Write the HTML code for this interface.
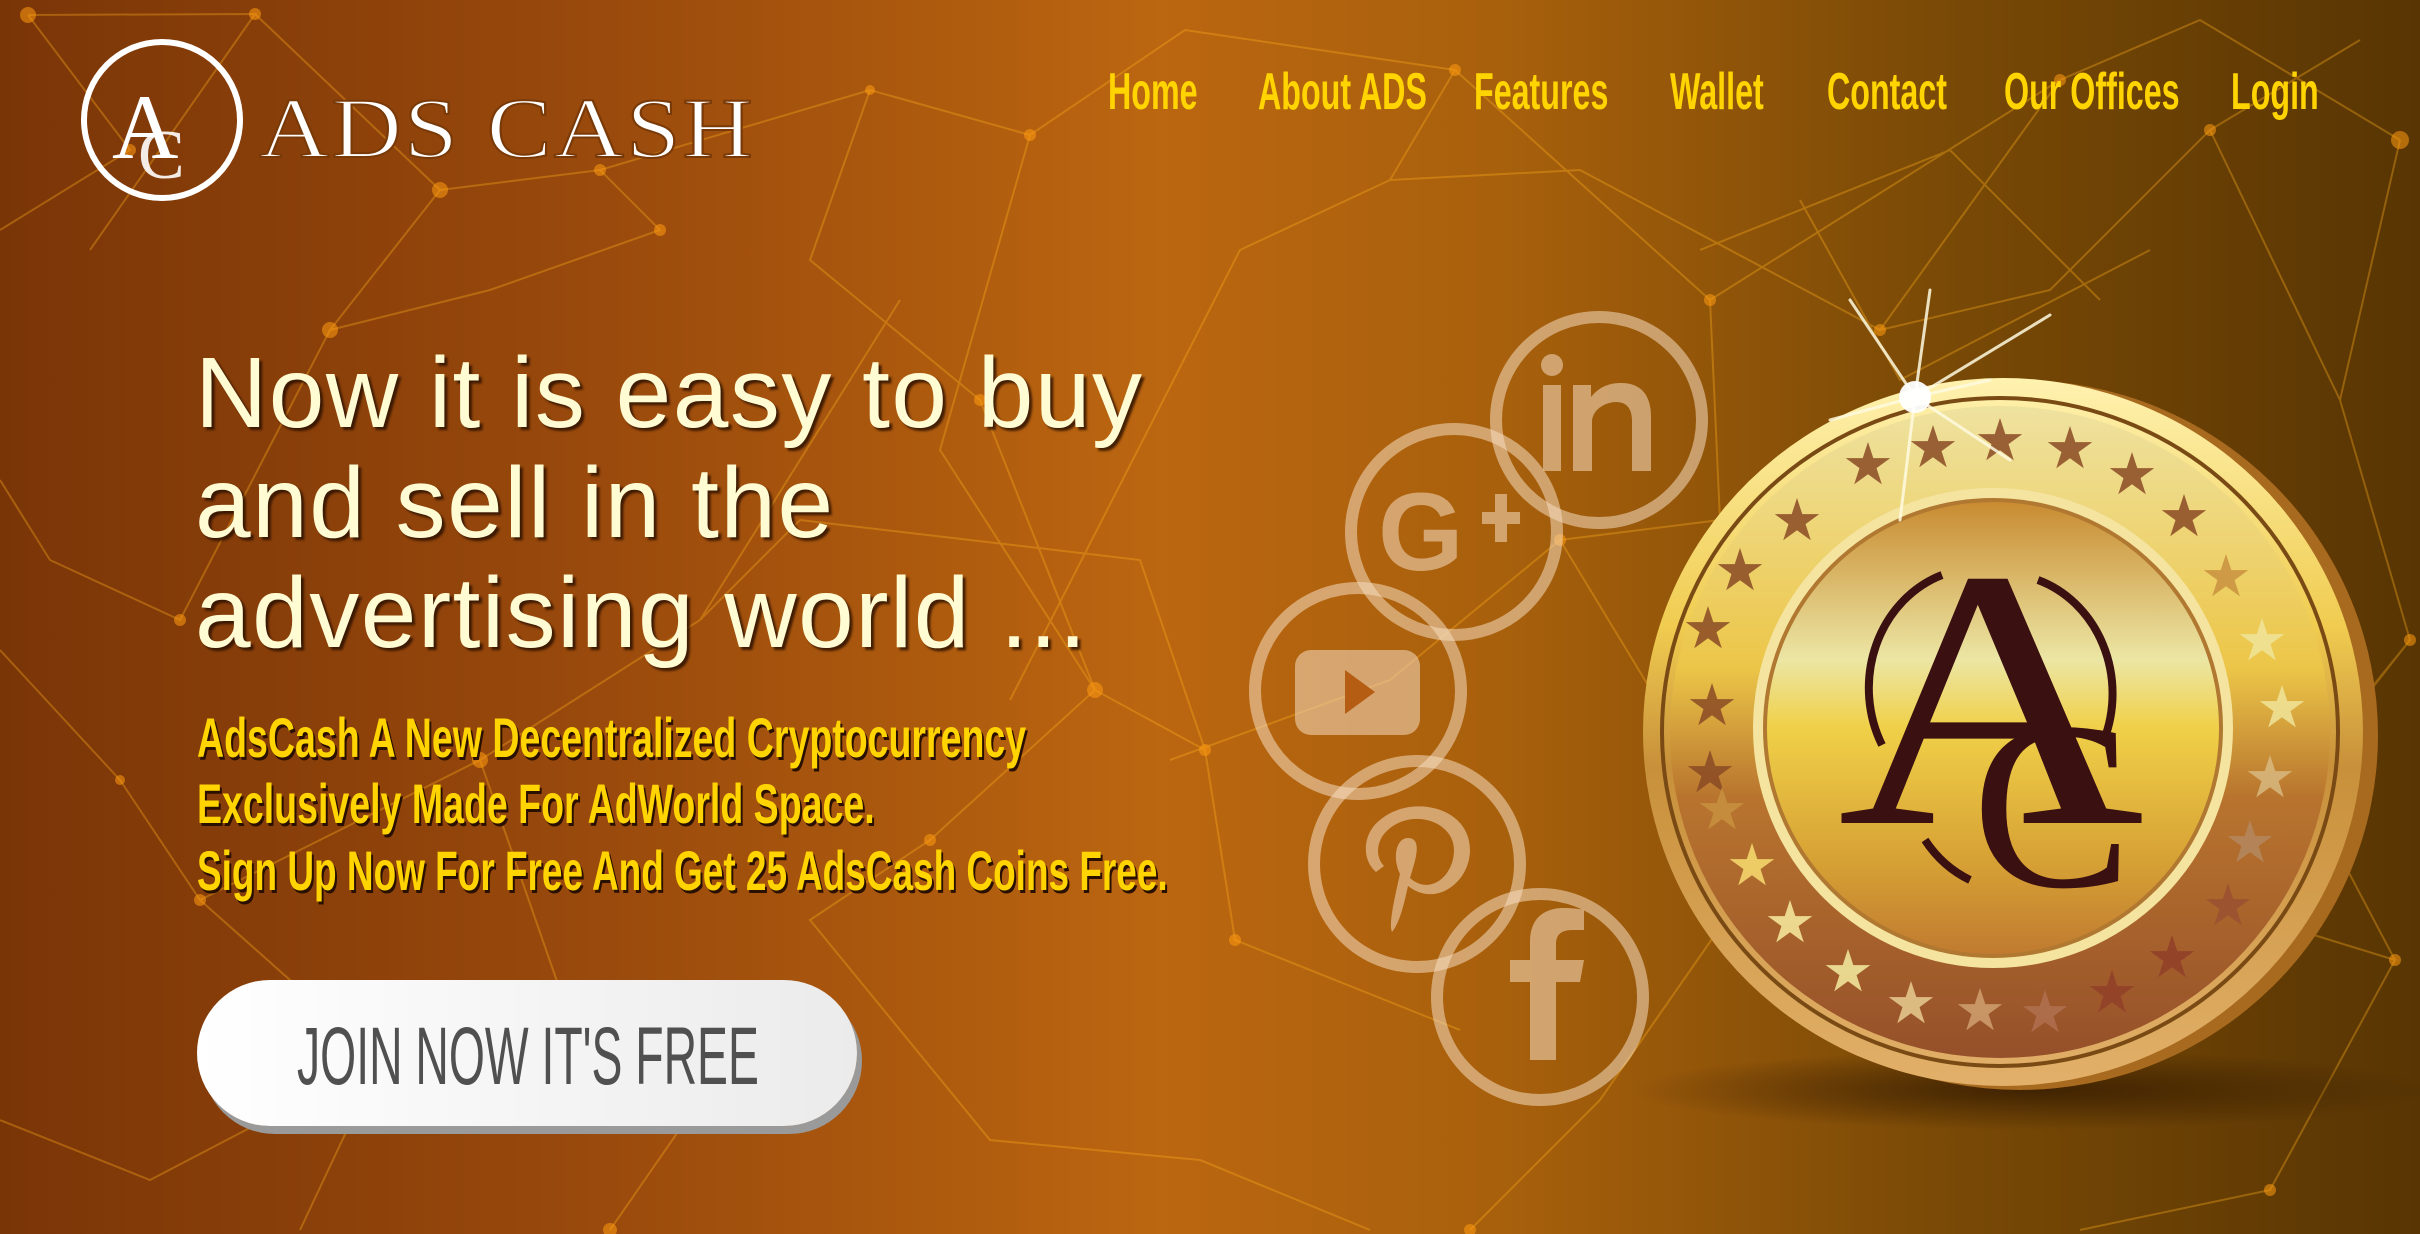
<!DOCTYPE html>
<html><head><meta charset="utf-8">
<style>
html,body{margin:0;padding:0}
body{width:2420px;height:1234px;overflow:hidden;position:relative;font-family:"Liberation Sans",sans-serif;
background:linear-gradient(90deg,#7a3507 0%,#9a4a0c 25%,#bb6610 48%,#a8600c 62%,#7a4a06 80%,#583503 100%);}
.nav{position:absolute;top:62px;color:#ffd400;font-family:"Liberation Sans Narrow","Liberation Sans",sans-serif;font-weight:bold;font-size:52px;transform:scaleX(0.62);transform-origin:left top;white-space:nowrap}
.h1{position:absolute;left:195px;top:338px;font-size:100px;line-height:110px;color:#fffbd2;text-shadow:3px 3px 2px rgba(40,15,0,.8);white-space:nowrap;letter-spacing:1.5px}
.sub{position:absolute;left:197px;white-space:nowrap;color:#ffd400;font-family:"Liberation Sans Narrow","Liberation Sans",sans-serif;font-weight:bold;font-size:56px;transform:scaleX(0.67);transform-origin:left top;text-shadow:3px 3px 0 #2a1000}
.btn{position:absolute;left:197px;top:980px;width:660px;height:146px;border-radius:73px;background:linear-gradient(90deg,#ffffff,#ebebeb);box-shadow:5px 8px 0 #9a9a9a}
.btn span{position:absolute;left:100px;top:30px;font-family:"Liberation Sans Narrow","Liberation Sans",sans-serif;font-size:82px;color:#505050;white-space:nowrap;transform:scaleX(0.565);transform-origin:left top}
</style></head><body>
<svg width="2420" height="1234" style="position:absolute;left:0;top:0" stroke="#ffb01e" stroke-opacity=".35" stroke-width="2" fill="none">
<path d="M28 15L130 150L0 230M28 15L255 14L90 250M255 14L440 190L330 330L180 620L50 560L0 480M440 190L600 170L660 230L490 290L330 330M600 170L870 90L1030 135L1185 30L1455 70L1710 300L2060 80L2200 20L2400 140M870 90L810 260L980 400L1095 690L930 840L810 920L990 1140L1200 1160L1370 1230M1030 135L940 450L1095 690L1205 750L1235 940L1460 1030M1455 70L1390 180L1240 250L1010 700M1710 300L1720 520L1560 540L1390 680L1170 760M2060 80L1880 330L2050 290L2210 130L2360 40M2400 140L2340 400L2410 640L2300 780L2395 960L2270 1190L2080 1230M200 900L380 1060L150 1180L0 1120M120 780L200 900L480 760L560 990L700 1100L610 1230M300 1230L380 1060M900 300L700 620L800 520L1140 560L1205 750M480 760L700 620M1560 540L1760 870L1600 1100L1470 1230M0 650L120 780M2340 400L2210 130M2410 640L2200 900L2395 960M1390 180L1580 170L1880 330M1700 250L1950 150L2100 300M1800 200L1900 380L2150 250"/>
<g fill="#ff9a10" fill-opacity=".55" stroke="none">
<circle cx="28" cy="15" r="8"/><circle cx="255" cy="14" r="6"/><circle cx="130" cy="150" r="6"/><circle cx="440" cy="190" r="8"/><circle cx="330" cy="330" r="8"/><circle cx="180" cy="620" r="6"/><circle cx="600" cy="170" r="6"/><circle cx="660" cy="230" r="6"/><circle cx="870" cy="90" r="5"/><circle cx="1030" cy="135" r="6"/><circle cx="1455" cy="70" r="6"/><circle cx="1710" cy="300" r="6"/><circle cx="2060" cy="80" r="6"/><circle cx="2400" cy="140" r="9"/><circle cx="980" cy="400" r="6"/><circle cx="1095" cy="690" r="8"/><circle cx="930" cy="840" r="6"/><circle cx="1205" cy="750" r="6"/><circle cx="1560" cy="540" r="6"/><circle cx="2410" cy="640" r="6"/><circle cx="200" cy="900" r="6"/><circle cx="480" cy="760" r="8"/><circle cx="560" cy="990" r="6"/><circle cx="380" cy="1060" r="7"/><circle cx="1470" cy="1230" r="6"/><circle cx="120" cy="780" r="5"/><circle cx="2395" cy="960" r="6"/><circle cx="2270" cy="1190" r="6"/><circle cx="1880" cy="330" r="6"/><circle cx="2210" cy="130" r="6"/><circle cx="610" cy="1230" r="7"/><circle cx="1235" cy="940" r="6"/>
</g>
</svg>

<svg width="800" height="220" style="position:absolute;left:0;top:20px">
<circle cx="162" cy="100" r="78" fill="none" stroke="#fff" stroke-width="6"/>
<text x="112" y="138" font-family="Liberation Serif,serif" font-size="92" fill="#fff">A</text>
<text x="138" y="158" font-family="Liberation Serif,serif" font-size="70" fill="#fff" fill-opacity=".9">C</text>
<text x="259" y="137" font-family="Liberation Serif,serif" font-size="86" fill="#fff" stroke="#7a3a08" stroke-width="2" letter-spacing="2" textLength="496" lengthAdjust="spacingAndGlyphs">ADS CASH</text>
</svg>

<div class="nav" style="left:1108px">Home</div>
<div class="nav" style="left:1258px">About ADS</div>
<div class="nav" style="left:1474px">Features</div>
<div class="nav" style="left:1670px">Wallet</div>
<div class="nav" style="left:1827px">Contact</div>
<div class="nav" style="left:2004px">Our Offices</div>
<div class="nav" style="left:2231px">Login</div>

<div class="h1">Now it is easy to buy<br>and sell in the<br>advertising world ...</div>

<div class="sub" style="top:705px">AdsCash A New Decentralized Cryptocurrency</div>
<div class="sub" style="top:771px">Exclusively Made For AdWorld Space.</div>
<div class="sub" style="top:838px;transform:scaleX(0.66)">Sign Up Now For Free And Get 25 AdsCash Coins Free.</div>

<div class="btn"><span>JOIN NOW IT'S FREE</span></div>

<svg width="2420" height="1234" style="position:absolute;left:0;top:0">
<g fill="none" stroke="#f5dcc0" stroke-opacity=".55" stroke-width="12">
<circle cx="1599" cy="420" r="103"/><circle cx="1454" cy="532" r="103"/><circle cx="1358" cy="691" r="103"/><circle cx="1417" cy="864" r="103"/><circle cx="1540" cy="997" r="103"/>
</g>
<g fill="#f0d2b0" fill-opacity=".6">
<rect x="1543" y="385" width="18" height="86"/><circle cx="1552" cy="365" r="11"/>
<path d="M1573 385h18v12c8-10 18-14 30-14 20 0 30 12 30 34v54h-19v-50c0-12-5-19-16-19s-24 8-24 20v49h-19z"/>
<text x="1378" y="570" font-family="Liberation Sans,sans-serif" font-weight="bold" font-size="110" fill="#f0d2b0" fill-opacity=".6">G</text>
<path d="M1482 512h13v-18h12v18h13v12h-13v18h-12v-18h-13z"/>
<rect x="1295" y="650" width="125" height="85" rx="16"/>
</g>
<path d="M1345 670l30 22-30 22z" fill="#b55d12"/>
<path d="M1392 932c-4-8 4-40 8-58-8-16-4-36 8-36 16 0 6 26 2 40 20 18 44-2 44-28 0-30-46-44-70-16-8 10-8 24 0 32l-8 6c-16-14-12-40 4-52 30-26 90-14 90 30 0 32-34 58-62 36-4 18-8 36-16 46z" fill="#f0d2b0" fill-opacity=".6"/>
<path d="M1530 1060v-78h-20v-22h20v-18c0-22 12-34 34-34 8 0 16 1 20 2v20h-12c-12 0-16 6-16 14v16h28l-4 22h-24v78z" fill="#f0d2b0" fill-opacity=".6"/>
</svg>

<svg width="2420" height="1234" style="position:absolute;left:0;top:0">
<defs>
<linearGradient id="rim" x1="0" y1="0" x2="0" y2="1">
<stop offset="0" stop-color="#fff2b0"/><stop offset=".35" stop-color="#f0cc50"/><stop offset=".55" stop-color="#c8903a"/><stop offset="1" stop-color="#e2b06a"/></linearGradient>
<linearGradient id="ring" x1="0" y1="0" x2="0" y2="1">
<stop offset="0" stop-color="#efe2a0"/><stop offset=".4" stop-color="#ecc648"/><stop offset=".6" stop-color="#b8742e"/><stop offset="1" stop-color="#96502a"/></linearGradient>
<linearGradient id="face" x1="0" y1="0" x2="0" y2="1">
<stop offset="0" stop-color="#c88a30"/><stop offset=".35" stop-color="#ece6a4"/><stop offset=".5" stop-color="#f0d048"/><stop offset=".8" stop-color="#d6a034"/><stop offset="1" stop-color="#c07a30"/></linearGradient>
<radialGradient id="sh" cx=".5" cy=".5" r=".5"><stop offset="0" stop-color="#2a1400" stop-opacity=".7"/><stop offset="1" stop-color="#2a1400" stop-opacity="0"/></radialGradient>
</defs>
<ellipse cx="2030" cy="1090" rx="400" ry="40" fill="url(#sh)"/>
<ellipse cx="2020" cy="735" rx="358" ry="355" fill="#a86a1e"/>
<ellipse cx="2003" cy="732" rx="360" ry="354" fill="url(#rim)"/>
<ellipse cx="2000" cy="732" rx="338" ry="334" fill="none" stroke="#7a4a14" stroke-width="4"/>
<ellipse cx="2000" cy="732" rx="330" ry="326" fill="url(#ring)"/>
<g fill="#8a4a24" fill-opacity=".85" font-size="58" text-anchor="middle" font-family="DejaVu Sans,sans-serif">
<text x="1797" y="540">★</text><text x="1868" y="484">★</text><text x="1933" y="467">★</text><text x="2000" y="460">★</text><text x="2070" y="468">★</text><text x="2132" y="494">★</text><text x="2184" y="536">★</text><text x="1740" y="590">★</text><text x="1708" y="648">★</text><text x="1712" y="725">★</text><text x="1710" y="792">★</text>
<text x="2226" y="596" fill="#c89040">★</text><text x="2262" y="660" fill="#f0e49a">★</text><text x="2282" y="727" fill="#f0e49a">★</text><text x="2270" y="797" fill="#d8b880">★</text><text x="2250" y="862" fill="#b48860">★</text><text x="2228" y="925" fill="#9a5030">★</text><text x="2172" y="977" fill="#904028">★</text><text x="2112" y="1012" fill="#904028">★</text><text x="2045" y="1032" fill="#b07050">★</text><text x="1980" y="1030" fill="#d0a070">★</text><text x="1911" y="1023" fill="#e8cc90">★</text><text x="1848" y="991" fill="#f4eca0">★</text><text x="1790" y="942" fill="#f8eca0">★</text><text x="1752" y="885" fill="#f8dc70">★</text><text x="1722" y="829" fill="#c89040">★</text>
</g>
<ellipse cx="1993" cy="728" rx="240" ry="240" fill="#f4e4a0"/>
<ellipse cx="1993" cy="728" rx="228" ry="228" fill="url(#face)" stroke="#b07830" stroke-width="4"/>
<g fill="none" stroke="#3a1010" stroke-width="8">
<path d="M1882 745a110 120 0 0 1 60-170"/><path d="M2038 580a110 120 0 0 1 66 160"/><path d="M1925 840a110 120 0 0 0 45 40"/>
</g>
<text x="1991" y="823" text-anchor="middle" font-family="Liberation Serif,serif" font-size="370" fill="#3a1010" transform="translate(1991 0) scale(1.15 1) translate(-1991 0)">A</text>
<text x="2052" y="886" text-anchor="middle" font-family="Liberation Serif,serif" font-size="240" fill="#3a1010">C</text>
<g stroke="#fffbe0" stroke-linecap="round">
<path d="M1915 397L1850 300M1915 397L2050 315M1915 397L1930 290M1915 397L1900 520M1915 397L2010 460M1915 397L1830 420M1915 397L1990 380" stroke-width="3" opacity=".85"/>
</g>
<circle cx="1915" cy="397" r="16" fill="#fff" opacity=".95"/>
</svg>
</body></html>
